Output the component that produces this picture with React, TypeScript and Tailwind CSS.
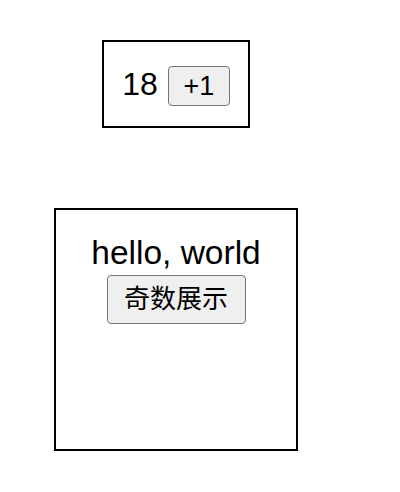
export default function App() {
  return (
    <div className="w-[352px] pt-[40px] flex flex-col items-center gap-[80px] bg-white text-black font-['Liberation_Sans','Noto_Sans_CJK_SC',sans-serif]">
      {/* counter box */}
      <div className="w-[148px] h-[88px] border-2 border-black flex items-center justify-center gap-[10px]">
        <span className="text-[32px] leading-none">18</span>
        <button className="mt-[4px] w-[62px] h-[40px] flex items-center justify-center text-[27px] rounded-[4px] border border-[#767676] bg-[#efefef]">
          +1
        </button>
      </div>

      {/* greeting box */}
      <div className="w-[244px] h-[243px] border-2 border-black flex flex-col items-center pt-[25px]">
        <div className="text-[33.5px] leading-[1.1]">hello, world</div>
        <button className="mt-[3px] w-[139px] h-[49px] flex items-center justify-center text-[26px] rounded-[4px] border border-[#767676] bg-[#efefef]">
          奇数展示
        </button>
      </div>
    </div>
  );
}
